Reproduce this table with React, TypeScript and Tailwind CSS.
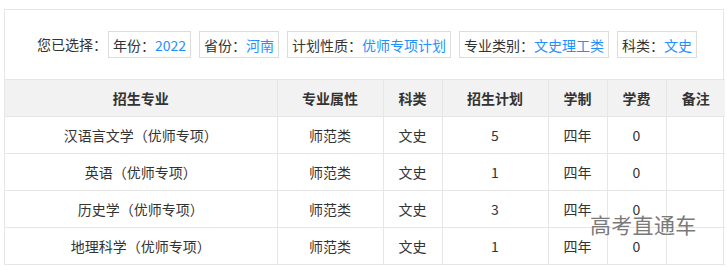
import React from 'react';

const filters = [
  { label: '年份', value: '2022' },
  { label: '省份', value: '河南' },
  { label: '计划性质', value: '优师专项计划' },
  { label: '专业类别', value: '文史理工类' },
  { label: '科类', value: '文史' },
];

const headers = ['招生专业', '专业属性', '科类', '招生计划', '学制', '学费', '备注'];
const widths = ['w-[272px]', 'w-[106px]', 'w-[59px]', 'w-[106px]', 'w-[59px]', 'w-[59px]', 'w-[59px]'];

const rows = [
  ['汉语言文学（优师专项）', '师范类', '文史', '5', '四年', '0', ''],
  ['英语（优师专项）', '师范类', '文史', '1', '四年', '0', ''],
  ['历史学（优师专项）', '师范类', '文史', '3', '四年', '0', ''],
  ['地理科学（优师专项）', '师范类', '文史', '1', '四年', '0', ''],
];

const App: React.FC = () => {
  return (
    <div
      className="relative w-[727px] h-[266px] bg-white pt-[9px] pl-1 text-[14px] text-[#333]"
      style={{ fontFamily: '"Noto Sans CJK SC", "Noto Sans", sans-serif' }}
    >
      <div className="w-[720px] border border-[#e6e6e6] border-b-0">
        <div className="h-[69px] flex items-center pl-[32px]">
          <span className="mr-px">您已选择：</span>
          <div className="flex gap-2">
            {filters.map((f) => (
              <div key={f.label} className="h-[27px] flex items-center px-1 border border-[#dcdcdc] leading-none">
                {f.label}：<span className="text-[#1e90ff]">{f.value}</span>
              </div>
            ))}
          </div>
        </div>
        <table className="w-full table-fixed border-collapse">
          <thead>
            <tr className="bg-[#f2f2f2]">
              {headers.map((h, i) => (
                <th key={h} className={`${widths[i]} h-[37px] p-0 font-bold border border-[#e6e6e6] border-l-0 last:border-r-0 text-center`}>
                  {h}
                </th>
              ))}
            </tr>
          </thead>
          <tbody>
            {rows.map((r, ri) => (
              <tr key={ri}>
                {r.map((c, ci) => (
                  <td key={ci} className="h-[37px] p-0 border border-[#e6e6e6] border-l-0 last:border-r-0 text-center">
                    {c}
                  </td>
                ))}
              </tr>
            ))}
          </tbody>
        </table>
      </div>
      <div className="absolute left-[590px] top-[214px] text-[21px] leading-none text-[#7a7a7a] tracking-[0.3px]">
        高考直通车
      </div>
    </div>
  );
};

export default App;
